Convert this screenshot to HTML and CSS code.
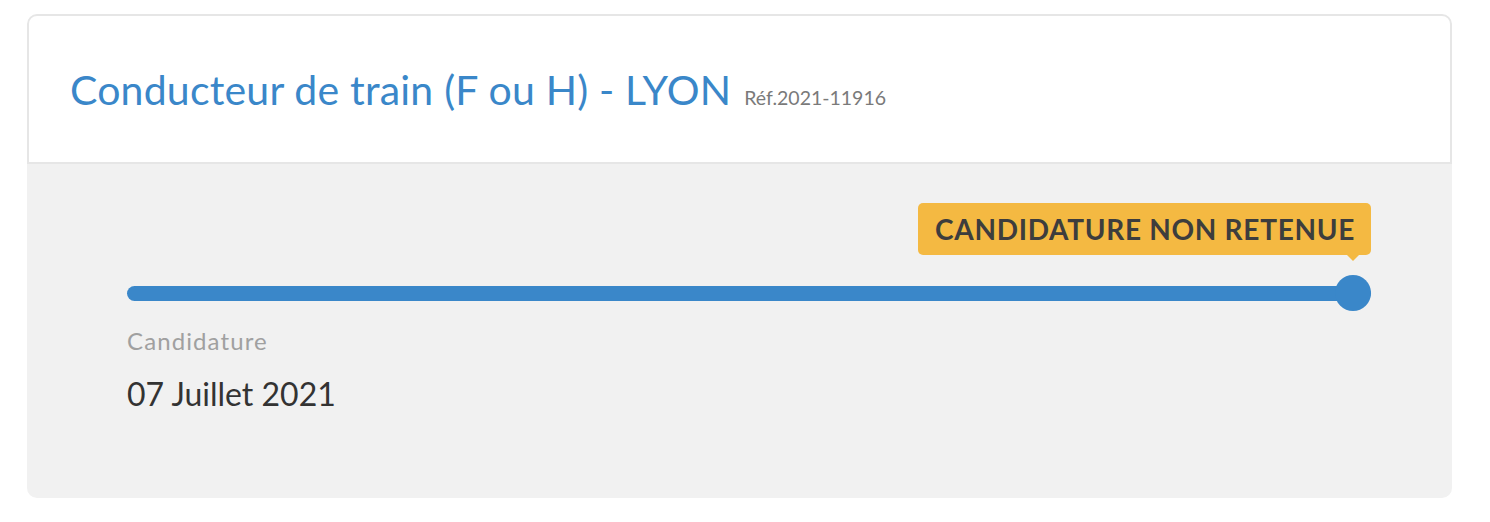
FILE: index.html
```
<!DOCTYPE html>
<html lang="fr">
<head>
    <meta charset="UTF-8">
    <title>Suivi de candidature</title>
    <link rel="stylesheet" href="styles.css">
</head>
<body>
    <div class="card">
        <div class="card-header">
            <h1 class="job-title">Conducteur de train (F ou H) - LYON</h1>
            <span class="job-ref">Réf.2021-11916</span>
        </div>
        <div class="card-body">
            <div class="status-row">
                <div class="status-badge">CANDIDATURE NON RETENUE</div>
            </div>
            <div class="progress">
                <div class="progress-bar"></div>
                <div class="progress-dot"></div>
            </div>
            <p class="step-label">Candidature</p>
            <p class="step-date">07 Juillet 2021</p>
        </div>
    </div>
</body>
</html>
```

FILE: styles.css
```
body {
    margin: 0;
    padding: 14px 38px 0 27px;
    font-family: Lato, "Open Sans", sans-serif;
    background: #fff;
}
.card {
    border-radius: 10px;
    overflow: hidden;
    background: #f1f1f1;
}
.card-header {
    background: #fff;
    border: 2px solid #e6e6e6;
    border-radius: 10px 10px 0 0;
    box-sizing: border-box;
    height: 150px;
    padding: 49px 41px 0;
    display: flex;
    align-items: baseline;
    gap: 13px;
}
.job-title {
    margin: 0;
    font-size: 41px;
    line-height: 50px;
    letter-spacing: 0.2px;
    font-weight: 400;
    color: #3a87c9;
}
.job-ref {
    font-size: 19.5px;
    color: #7a7a7a;
}
.card-body {
    padding: 39px 81px 84px 100px;
}
.status-row {
    display: flex;
    justify-content: flex-end;
}
.status-badge {
    position: relative;
    background: #f4b942;
    color: #3d3d3d;
    font-weight: 700;
    font-size: 28px;
    letter-spacing: 0.7px;
    padding: 0 16px 0 17px;
    height: 52px;
    line-height: 52px;
    border-radius: 5px;
}
.status-badge::after {
    content: "";
    position: absolute;
    right: 12px;
    bottom: -6px;
    border-left: 6px solid transparent;
    border-right: 6px solid transparent;
    border-top: 6px solid #f4b942;
}
.progress {
    position: relative;
    margin-top: 20px;
    height: 36px;
    display: flex;
    align-items: center;
}
.progress-bar {
    flex: 1;
    height: 15px;
    border-radius: 8px;
    background: #3a87c9;
}
.progress-dot {
    position: absolute;
    right: 0;
    top: 0;
    width: 36px;
    height: 36px;
    border-radius: 50%;
    background: #3a87c9;
}
.step-label {
    margin: 15px 0 0;
    font-size: 24px;
    line-height: 30px;
    letter-spacing: 1.1px;
    font-weight: 400;
    color: #a0a0a0;
}
.step-date {
    margin: 18px 0 0;
    font-size: 32px;
    line-height: 40px;
    color: #333;
}
```
